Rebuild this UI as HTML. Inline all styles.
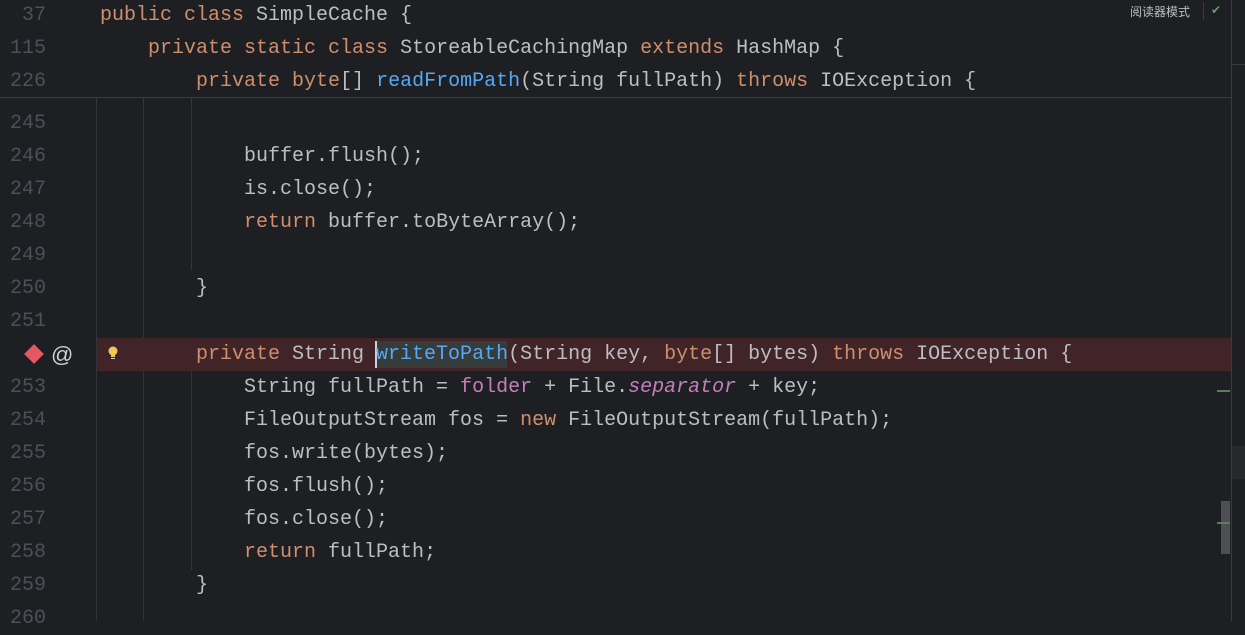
<!DOCTYPE html>
<html><head><meta charset="utf-8"><style>
*{margin:0;padding:0;box-sizing:border-box}
body{width:1245px;height:621px;background:#1e1f22;overflow:hidden;position:relative;font-family:"Liberation Mono",monospace;font-size:20px;color:#bcbec4}
.l{position:absolute;left:0;height:33px;line-height:33px;white-space:pre;width:1231px}
.n{position:absolute;left:0;width:46px;text-align:right;color:#4b5059}
.c{position:absolute;left:100px}
.k{color:#cf8e6d}.m{color:#56a8f5}.f{color:#c77dbb}.i{color:#c77dbb;font-style:italic}
.v{position:absolute;width:1px;background:#313438}
</style></head><body>
<div class="v" style="left:96px;top:97px;height:524px"></div>
<div class="v" style="left:143px;top:97px;height:524px"></div>
<div class="v" style="left:191px;top:97px;height:173px"></div>
<div class="v" style="left:191px;top:370px;height:200px"></div>
<div style="position:absolute;left:97px;top:338px;width:1134px;height:33px;background:#402428"></div>
<div style="position:absolute;left:375px;top:341px;width:132px;height:27px;background:#373b39"></div>
<div style="position:absolute;left:375px;top:341px;width:2px;height:27px;background:#ced0d6"></div>
<div class="l" style="top:-1px"><span class="n">37</span><span class="c"><span class="k">public class </span>SimpleCache {</span></div>
<div class="l" style="top:32px"><span class="n">115</span><span class="c">    <span class="k">private static class </span>StoreableCachingMap <span class="k">extends </span>HashMap {</span></div>
<div class="l" style="top:65px"><span class="n">226</span><span class="c">        <span class="k">private byte</span>[] <span class="m">readFromPath</span>(String fullPath) <span class="k">throws </span>IOException {</span></div>
<div style="position:absolute;left:0;top:97px;width:1231px;height:1px;background:#393b40"></div>
<div class="l" style="top:107px"><span class="n">245</span></div>
<div class="l" style="top:140px"><span class="n">246</span><span class="c">            buffer.flush();</span></div>
<div class="l" style="top:173px"><span class="n">247</span><span class="c">            is.close();</span></div>
<div class="l" style="top:206px"><span class="n">248</span><span class="c">            <span class="k">return </span>buffer.toByteArray();</span></div>
<div class="l" style="top:239px"><span class="n">249</span></div>
<div class="l" style="top:272px"><span class="n">250</span><span class="c">        }</span></div>
<div class="l" style="top:305px"><span class="n">251</span></div>
<div class="l" style="top:338px"><span class="c">        <span class="k">private </span>String <span class="m">writeToPath</span>(String key, <span class="k">byte</span>[] bytes) <span class="k">throws </span>IOException {</span></div>
<div style="position:absolute;left:27px;top:347px;width:14px;height:14px;background:#e55765;transform:rotate(45deg)"></div>
<div style="position:absolute;left:51px;top:338px;height:33px;line-height:33px;font-size:22px;color:#ced0d6;font-family:'Liberation Sans',sans-serif">@</div>
<svg style="position:absolute;left:107px;top:345px" width="12" height="16" viewBox="0 0 12 16"><circle cx="6" cy="6" r="4.5" fill="#f2c55c"/><rect x="4" y="10" width="4" height="2" fill="#f2c55c"/><rect x="4" y="13" width="4" height="1" fill="#ced0d6"/></svg>
<div class="l" style="top:371px"><span class="n">253</span><span class="c">            String fullPath = <span class="f">folder</span> + File.<span class="i">separator</span> + key;</span></div>
<div class="l" style="top:404px"><span class="n">254</span><span class="c">            FileOutputStream fos = <span class="k">new </span>FileOutputStream(fullPath);</span></div>
<div class="l" style="top:437px"><span class="n">255</span><span class="c">            fos.write(bytes);</span></div>
<div class="l" style="top:470px"><span class="n">256</span><span class="c">            fos.flush();</span></div>
<div class="l" style="top:503px"><span class="n">257</span><span class="c">            fos.close();</span></div>
<div class="l" style="top:536px"><span class="n">258</span><span class="c">            <span class="k">return </span>fullPath;</span></div>
<div class="l" style="top:569px"><span class="n">259</span><span class="c">        }</span></div>
<div class="l" style="top:602px"><span class="n">260</span></div>
<div style="position:absolute;left:1130px;top:3px;font-family:'Liberation Sans','Noto Sans CJK SC',sans-serif;font-size:12px;color:#bcbec4">阅读器模式</div>
<div style="position:absolute;left:1203px;top:2px;width:1px;height:18px;background:#393b40"></div>
<div style="position:absolute;left:1211px;top:3px;font-size:12px;color:#5f9e6a;font-family:'DejaVu Sans',sans-serif">✔</div>
<div style="position:absolute;left:1231px;top:0;width:1px;height:621px;background:#393b40"></div>
<div style="position:absolute;left:1232px;top:64px;width:13px;height:1px;background:#393b40"></div>
<div style="position:absolute;left:1232px;top:446px;width:13px;height:33px;background:#26282c"></div>
<div style="position:absolute;left:1221px;top:501px;width:9px;height:53px;background:#4d4f52"></div>
<div style="position:absolute;left:1217px;top:390px;width:13px;height:2px;background:#5b7d62"></div>
<div style="position:absolute;left:1217px;top:522px;width:13px;height:2px;background:#5b7d62"></div>
</body></html>
